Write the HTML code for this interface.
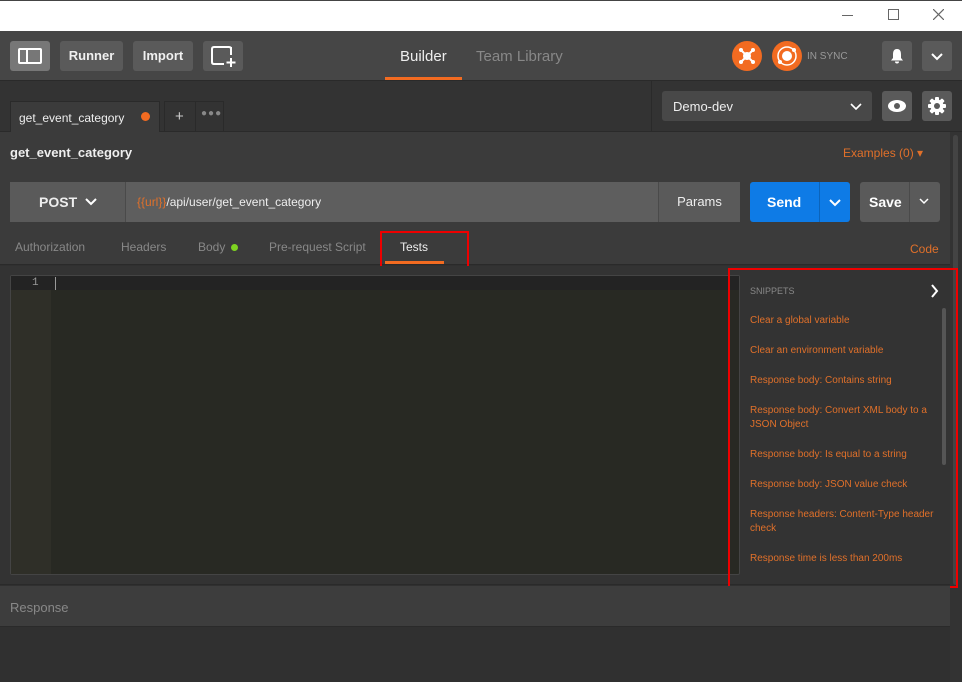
<!DOCTYPE html>
<html><head><meta charset="utf-8"><style>
*{margin:0;padding:0;box-sizing:border-box}
body{width:962px;height:682px;overflow:hidden;background:#303030;font-family:"Liberation Sans",sans-serif;position:relative;color:#fff}
.a{position:absolute}
.btn{position:absolute;height:30px;background:#5a5a5a;border-radius:3px;color:#f0f0f0;font-size:13px;font-weight:bold;text-align:center;line-height:30px}
.sn{position:absolute;left:750px;color:#e0702a;font-size:10px;line-height:14px;width:185px}
svg{position:absolute}
</style></head><body>
<!-- title bar -->
<div class="a" style="left:0;top:0;width:962px;height:31px;background:#fff;border-top:1px solid #444"></div>
<div class="a" style="left:842px;top:15px;width:11px;height:1px;background:#666"></div>
<div class="a" style="left:888px;top:9px;width:11px;height:11px;border:1px solid #666"></div>
<svg style="left:933px;top:9px" width="11" height="11"><path d="M0 0L11 11M11 0L0 11" stroke="#666" stroke-width="1.2"/></svg>
<!-- header -->
<div class="a" style="left:0;top:31px;width:962px;height:50px;background:#464646;border-bottom:1px solid #2a2a2a"></div>
<div class="btn" style="left:10px;top:41px;width:40px;background:#777"><div class="a" style="left:8px;top:7px;width:24px;height:16px;border:2px solid #fff;border-radius:2px"></div><div class="a" style="left:16px;top:7px;width:2px;height:16px;background:#fff"></div></div>
<div class="btn" style="left:60px;top:41px;width:63px">Runner</div>
<div class="btn" style="left:133px;top:41px;width:60px">Import</div>
<div class="btn" style="left:203px;top:41px;width:40px"><svg style="left:8px;top:5px" width="26" height="22"><path d="M16 1H3Q1 1 1 3V16Q1 18 3 18H13M20 1Q20 1 20 3V9" fill="none" stroke="#fff" stroke-width="2"/><path d="M16 1H18Q20 1 20 3" fill="none" stroke="#fff" stroke-width="2"/><path d="M20 12V21M15.5 16.5H24.5" stroke="#fff" stroke-width="2"/></svg></div>
<div class="a" style="left:400px;top:48px;font-size:15px;color:#eee">Builder</div>
<div class="a" style="left:385px;top:77px;width:77px;height:3px;background:#f26b21"></div>
<div class="a" style="left:476px;top:48px;font-size:15px;color:#888">Team Library</div>
<svg style="left:732px;top:41px" width="30" height="30"><circle cx="15" cy="15" r="15" fill="#f26b21"/><path d="M9 9L21 21M21 9L9 21" stroke="#fff" stroke-width="2"/><circle cx="15" cy="15" r="4" fill="#fff"/><circle cx="9" cy="9" r="2" fill="#fff"/><circle cx="21" cy="9" r="2" fill="#fff"/><circle cx="9" cy="21" r="2" fill="#fff"/><circle cx="21" cy="21" r="2" fill="#fff"/></svg>
<svg style="left:772px;top:41px" width="30" height="30"><circle cx="15" cy="15" r="15" fill="#f26b21"/><circle cx="15" cy="15" r="9" fill="none" stroke="#fff" stroke-width="1.5"/><circle cx="15" cy="15" r="5" fill="#fff"/><circle cx="22" cy="9" r="2" fill="#fff"/><circle cx="8" cy="21" r="2" fill="#fff"/></svg>
<div class="a" style="left:807px;top:51px;font-size:10px;color:#999">IN SYNC</div>
<div class="btn" style="left:882px;top:41px;width:30px"><svg style="left:8px;top:7px" width="14" height="16"><path d="M7 1C3.5 1 3 4 3 7V10L1 12.5H13L11 10V7C11 4 10.5 1 7 1Z" fill="#fff"/><path d="M5 13.5A2 2 0 0 0 9 13.5Z" fill="#fff"/></svg></div>
<div class="btn" style="left:922px;top:41px;width:30px"><svg style="left:9px;top:12px" width="12" height="8"><path d="M1 1L6 6L11 1" fill="none" stroke="#fff" stroke-width="2"/></svg></div>
<!-- tab bar -->
<div class="a" style="left:0;top:81px;width:962px;height:51px;background:#333;border-bottom:1px solid #2a2a2a"></div>
<div class="a" style="left:10px;top:101px;width:150px;height:31px;background:#3b3b3b;border:1px solid #2a2a2a;border-bottom:none;font-size:12px;color:#eee;padding:9px 0 0 8px">get_event_category</div>
<div class="a" style="left:141px;top:112px;width:9px;height:9px;border-radius:50%;background:#f26b21"></div>
<div class="a" style="left:164px;top:101px;width:60px;height:31px;border:1px solid #2a2a2a;border-bottom:none;color:#ccc;font-size:15px"><span class="a" style="left:10px;top:6px">+</span><span class="a" style="left:30px;top:0;width:1px;height:31px;background:#2a2a2a"></span><span class="a" style="left:36px;top:6px;font-size:10px;color:#888;letter-spacing:1px">●●●</span></div>
<div class="a" style="left:651px;top:81px;width:1px;height:51px;background:#2a2a2a"></div>
<div class="a" style="left:662px;top:91px;width:210px;height:30px;background:#484848;border-radius:3px;font-size:13px;color:#eee;padding:8px 0 0 11px">Demo-dev<svg style="left:188px;top:12px" width="12" height="7"><path d="M1 1L6 6L11 1" fill="none" stroke="#fff" stroke-width="1.6"/></svg></div>
<div class="btn" style="left:882px;top:91px;width:30px"><div class="a" style="left:6px;top:9px;width:18px;height:12px;border-radius:50%;background:#fff"></div><div class="a" style="left:12px;top:12px;width:6px;height:6px;border-radius:50%;background:#5a5a5a"></div></div>
<div class="btn" style="left:922px;top:91px;width:30px"><svg style="left:5px;top:5px" width="20" height="20" viewBox="0 0 20 20"><g fill="#fff"><circle cx="10" cy="10" r="6.5"/><rect x="8" y="1" width="4" height="18" rx="1"/><rect x="1" y="8" width="18" height="4" rx="1"/><rect x="8" y="1" width="4" height="18" rx="1" transform="rotate(45 10 10)"/><rect x="8" y="1" width="4" height="18" rx="1" transform="rotate(-45 10 10)"/></g><circle cx="10" cy="10" r="3" fill="#5a5a5a"/></svg></div>
<!-- request area -->
<div class="a" style="left:0;top:132px;width:950px;height:133px;background:#3b3b3b;border-bottom:1px solid #2a2a2a"></div>
<div class="a" style="left:950px;top:132px;width:12px;height:550px;background:#333"></div>
<div class="a" style="left:953px;top:135px;width:5px;height:450px;background:#444;border-radius:3px"></div>
<div class="a" style="left:10px;top:145px;font-size:13px;font-weight:bold;color:#eee">get_event_category</div>
<div class="a" style="left:843px;top:146px;font-size:12px;color:#e0702a">Examples (0) ▾</div>
<div class="a" style="left:10px;top:182px;width:730px;height:40px;background:#5e5e5e;border-radius:3px"></div>
<div class="a" style="left:10px;top:182px;width:116px;height:40px;background:#5a5a5a;border-right:1px solid #4a4a4a;font-size:14px;font-weight:bold;color:#eee;padding:12px 0 0 29px">POST<svg style="left:75px;top:16px" width="12" height="8"><path d="M1 1L6 6L11 1" fill="none" stroke="#fff" stroke-width="2"/></svg></div>
<div class="a" style="left:137px;top:195px;font-size:12px;color:#eee"><span style="color:#e0702a">{{url}}</span>/api/user/get_event_category</div>
<div class="a" style="left:658px;top:182px;width:82px;height:40px;background:#5a5a5a;border-left:1px solid #4a4a4a;font-size:13px;color:#eee;text-align:center;line-height:40px">Params</div>
<div class="a" style="left:750px;top:182px;width:100px;height:40px;background:#0e7be6;border-radius:3px"><span class="a" style="left:17px;top:12px;font-size:14px;font-weight:bold">Send</span><span class="a" style="left:69px;top:0;width:1px;height:40px;background:#0b64bb"></span><svg style="left:79px;top:17px" width="12" height="8"><path d="M1 1L6 6L11 1" fill="none" stroke="#fff" stroke-width="2"/></svg></div>
<div class="a" style="left:860px;top:182px;width:80px;height:40px;background:#5a5a5a;border-radius:3px"><span class="a" style="left:9px;top:12px;font-size:14px;font-weight:bold">Save</span><span class="a" style="left:49px;top:0;width:1px;height:40px;background:#4a4a4a"></span><svg style="left:59px;top:16px" width="10" height="7"><path d="M1 1L5 5L9 1" fill="none" stroke="#fff" stroke-width="1.5"/></svg></div>
<div class="a" style="left:15px;top:240px;font-size:12px;color:#888">Authorization</div>
<div class="a" style="left:121px;top:240px;font-size:12px;color:#888">Headers</div>
<div class="a" style="left:198px;top:240px;font-size:12px;color:#888">Body</div>
<div class="a" style="left:231px;top:244px;width:7px;height:7px;border-radius:50%;background:#7ed321"></div>
<div class="a" style="left:269px;top:240px;font-size:12px;color:#888">Pre-request Script</div>
<div class="a" style="left:400px;top:240px;font-size:12px;color:#eee">Tests</div>
<div class="a" style="left:385px;top:261px;width:59px;height:3px;background:#f26b21"></div>
<div class="a" style="left:380px;top:231px;width:89px;height:43px;border:2px solid #e00"></div>
<div class="a" style="left:910px;top:242px;font-size:12px;color:#e0702a">Code</div>
<!-- editor -->
<div class="a" style="left:0;top:266px;width:950px;height:319px;background:#333;border-bottom:1px solid #2a2a2a"></div>
<div class="a" style="left:10px;top:275px;width:730px;height:300px;background:#282923;border:1px solid #444;border-radius:2px"></div>
<div class="a" style="left:11px;top:276px;width:40px;height:298px;background:#2f2f28"></div>
<div class="a" style="left:11px;top:276px;width:728px;height:14px;background:#232323"></div>
<div class="a" style="left:32px;top:277px;font-size:11px;line-height:12px;color:#999;font-family:'Liberation Mono',monospace">1</div>
<div class="a" style="left:55px;top:277px;width:1px;height:13px;background:#999"></div>
<div class="a" style="left:942px;top:308px;width:4px;height:157px;background:#555;border-radius:2px"></div>
<div class="a" style="left:750px;top:286px;font-size:9px;color:#888">SNIPPETS</div>
<svg style="left:930px;top:284px" width="9" height="14"><path d="M2 1L7 7L2 13" fill="none" stroke="#fff" stroke-width="2"/></svg>
<div class="sn" style="top:314px">Clear a global variable</div>
<div class="sn" style="top:344px">Clear an environment variable</div>
<div class="sn" style="top:374px">Response body: Contains string</div>
<div class="sn" style="top:404px">Response body: Convert XML body to a JSON Object</div>
<div class="sn" style="top:448px">Response body: Is equal to a string</div>
<div class="sn" style="top:478px">Response body: JSON value check</div>
<div class="sn" style="top:508px">Response headers: Content-Type header check</div>
<div class="sn" style="top:552px">Response time is less than 200ms</div>
<div class="a" style="left:728px;top:268px;width:230px;height:320px;border:2px solid #e00"></div>
<!-- response -->
<div class="a" style="left:0;top:586px;width:950px;height:41px;background:#3d3d3d;border-bottom:1px solid #2a2a2a"></div>
<div class="a" style="left:10px;top:600px;font-size:13px;color:#888">Response</div>
</body></html>
